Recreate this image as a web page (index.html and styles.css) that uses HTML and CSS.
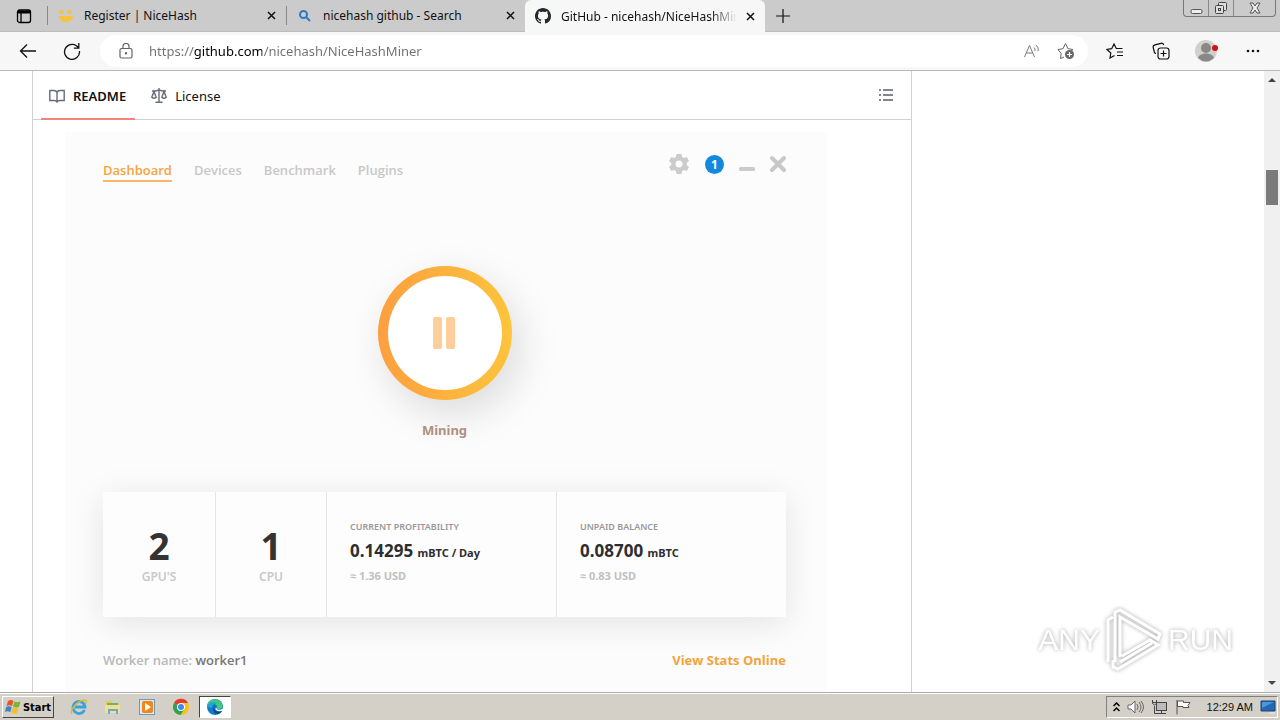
FILE: index.html
```html
<!DOCTYPE html>
<html lang="en">
<head>
    <meta charset="UTF-8">
    <meta name="viewport" content="width=device-width, initial-scale=1.0">
    <title>GitHub - nicehash/NiceHashMiner</title>
    <link rel="stylesheet" href="styles.css">
</head>
<body>
    <header class="browser">
        <div class="tab-bar">
            <button class="tab-actions" aria-label="Tab actions">
                <svg width="16" height="16" viewBox="0 0 16 16" fill="none" stroke="#000"><rect x="1.500" y="2" width="13" height="12.500" rx="2" stroke-width="1.300"/><path d="M2 4h12" stroke-width="3"/><path d="M5 5v9" stroke-width="1.300"/></svg>
            </button>
            <div class="tab">
                <svg class="tab-icon" width="16" height="16" viewBox="0 0 16 16"><rect x="1" y="2" width="5" height="4" rx="2" fill="#f2c14b"/><rect x="9" y="2" width="5" height="4" rx="2" fill="#f2c14b"/><path d="M1 8h14c0 8-14 8-14 0z" fill="#f2c43f"/></svg>
                <a class="tab-title" href="#">Register | NiceHash</a>
                <button class="tab-close" aria-label="Close tab"><svg width="9" height="9" viewBox="0 0 9 9"><path d="M1 1l7 7M8 1L1 8" stroke="#111" stroke-width="1.500"/></svg></button>
            </div>
            <div class="tab">
                <svg class="tab-icon" width="16" height="16" viewBox="0 0 16 16" fill="none" stroke="#2f78c4" stroke-width="2"><circle cx="6.500" cy="6.500" r="3.500"/><path d="M9 9l4 4"/></svg>
                <a class="tab-title" href="#">nicehash github - Search</a>
                <button class="tab-close" aria-label="Close tab"><svg width="9" height="9" viewBox="0 0 9 9"><path d="M1 1l7 7M8 1L1 8" stroke="#111" stroke-width="1.500"/></svg></button>
            </div>
            <div class="tab active">
                <svg class="tab-icon" width="16" height="16" viewBox="0 0 16 16" fill="#24292f"><path d="M8 0C3.580 0 0 3.580 0 8c0 3.540 2.290 6.530 5.470 7.590.4.070.55-.17.55-.38 0-.19-.01-.82-.01-1.490-2.010.37-2.530-.49-2.690-.94-.09-.23-.48-.94-.82-1.130-.28-.15-.68-.52-.01-.53.63-.01 1.080.58 1.230.82.72 1.210 1.870.87 2.330.66.070-.52.28-.87.51-1.070-1.780-.2-3.640-.89-3.640-3.950 0-.87.31-1.590.82-2.150-.08-.2-.36-1.020.08-2.120 0 0 .67-.21 2.200.82.64-.18 1.320-.27 2-.27s1.360.09 2 .27c1.530-1.040 2.200-.82 2.200-.82.44 1.100.16 1.920.08 2.120.51.56.82 1.270.82 2.150 0 3.070-1.870 3.750-3.650 3.950.29.25.54.73.54 1.480 0 1.070-.01 1.930-.01 2.200 0 .21.15.46.55.38A8.010 8.010 0 0 0 16 8c0-4.420-3.580-8-8-8z"/></svg>
                <a class="tab-title" href="#">GitHub - nicehash/NiceHashMiner</a>
                <button class="tab-close" aria-label="Close tab"><svg width="9" height="9" viewBox="0 0 9 9"><path d="M1 1l7 7M8 1L1 8" stroke="#111" stroke-width="1.500"/></svg></button>
            </div>
            <button class="new-tab" aria-label="New tab"><svg width="14" height="14" viewBox="0 0 14 14"><path d="M7 0v14M0 7h14" stroke="#111" stroke-width="1.200"/></svg></button>
            <div class="window-buttons">
                <button aria-label="Minimize"><svg width="13" height="14" viewBox="0 0 13 14" fill="#eee" stroke="#555"><rect x="1" y="8.500" width="11" height="4" rx="1.500"/></svg></button>
                <button aria-label="Restore"><svg width="14" height="14" viewBox="0 0 14 14" fill="#ddd" stroke="#444"><rect x="4.500" y="1.500" width="8" height="8" rx="1"/><rect x="1.500" y="4.500" width="8" height="8" rx="1"/><rect x="4.500" y="7.500" width="2" height="2"/></svg></button>
                <button class="wide" aria-label="Close"><svg width="14" height="14" viewBox="0 0 14 14"><path d="M2 2h3l2 3 2-3h3L9 7l3 5H9L7 9l-2 3H2l3-5z" fill="#eee" stroke="#555"/></svg></button>
            </div>
        </div>

        <div class="toolbar">
            <button class="nav-button" aria-label="Back"><svg width="18" height="16" viewBox="0 0 18 16" fill="none" stroke="#111" stroke-width="1.300"><path d="M17 8H1.500M8 1.500L1.500 8 8 14.500"/></svg></button>
            <button class="nav-button" aria-label="Refresh"><svg width="18" height="18" viewBox="0 0 18 18" fill="none" stroke="#111" stroke-width="1.300"><path d="M15.500 6A7.500 7.500 0 1 0 16.500 9M15.800 1v5.200h-5"/></svg></button>
            <div class="address-bar">
                <svg width="14" height="16" viewBox="0 0 14 16" fill="none" stroke="#666" stroke-width="1.200"><rect x="1" y="5.500" width="12" height="9.500" rx="1.500"/><path d="M4 5.500V3.500a3 3 0 0 1 6 0v2"/><circle cx="7" cy="10.300" r=".6" fill="#666"/></svg>
                <input class="address" type="text" aria-label="Address" value="https://github.com/nicehash/NiceHashMiner">
                <button aria-label="Read aloud"><svg width="18" height="16" viewBox="0 0 18 16" fill="none" stroke="#777"><path d="M1.500 14L6.500 2.500l5 11.500M3.300 10h6.500M11 4.500q1.500 1.500 1 3.500M13.200 2.200q2.800 2.300 2 6"/></svg></button>
                <button aria-label="Add to favorites"><svg width="18" height="18" viewBox="0 0 18 18" fill="none" stroke="#666"><path d="M7 15l-3.500 1.500.6-5L1 7.500l5-.8L8.500 1.500 11 6.700l5 .8-2 1.700"/><circle cx="12.500" cy="12.500" r="4.500" fill="#666" stroke="none"/><path d="M12.500 10v5M10 12.500h5" stroke="#fff" stroke-width="1.200"/></svg></button>
            </div>
            <button class="tool" aria-label="Favorites"><svg width="18" height="16" viewBox="0 0 18 16" fill="none" stroke="#111" stroke-width="1.200"><path d="M8.500 12.500L4 15l.8-5L1 6.500l4.700-.8L8 1l2.300 4.500h6.200M11 9h6M11 12.500h6"/></svg></button>
            <button class="tool" aria-label="Collections"><svg width="18" height="18" viewBox="0 0 18 18" fill="none" stroke="#111" stroke-width="1.200"><path d="M4 11.500c-1 0-1.500-.7-1.700-1.500L1.200 5.500C.9 4 1.500 3.200 3 2.800l6-1.500c1.500-.4 2.300.2 2.700 1.700"/><rect x="6" y="6" width="11" height="11" rx="2.500"/><path d="M11.500 8.500v6M8.500 11.500h6"/></svg></button>
            <button class="tool profile" aria-label="Profile"><svg width="24" height="22" viewBox="0 0 24 22"><circle cx="11" cy="11" r="11" fill="#d2d0ce"/><circle cx="11" cy="8" r="5" fill="#8a8886"/><path d="M3 18c1.500-6 14.500-6 16 0q-8 7-16 0z" fill="#8a8886"/><circle cx="20" cy="8" r="3" fill="#d40f14"/></svg></button>
            <button class="tool" aria-label="Settings and more"><svg width="14" height="4" viewBox="0 0 14 4" fill="#111"><circle cx="2" cy="2" r="1.300"/><circle cx="7" cy="2" r="1.300"/><circle cx="12" cy="2" r="1.300"/></svg></button>
        </div>
    </header>

    <main class="page">
        <section class="readme">
            <nav class="readme-nav">
                <a class="readme-tab selected" href="#"><svg width="16" height="16" viewBox="0 0 16 16" fill="none" stroke="#656d76" stroke-width="1.400"><path d="M8 4.500C7.500 3 6.500 2.500 5 2.500H.8v10H5c1.500 0 2.500.5 3 1.500.5-1 1.500-1.500 3-1.500h4.200v-10H11c-1.500 0-2.500.5-3 2zM8 4.500V14"/></svg>README</a>
                <a class="readme-tab" href="#"><svg width="16" height="16" viewBox="0 0 16 16" fill="none" stroke="#656d76" stroke-width="1.400"><path d="M8 0v14M4.500 14.300h7M1 3h3.500L8 2l3.500 1H15M3 3.500L.8 9.200q2.200 2 4.400 0zM13 3.500l-2.200 5.700q2.200 2 4.400 0z"/></svg>License</a>
                <button class="outline" aria-label="Outline"><svg width="16" height="14" viewBox="0 0 16 14" stroke="#57606a" stroke-width="1.400"><path d="M5 2h10M5 7h10M5 12h10M1 2h2M1 7h2M1 12h2"/></svg></button>
            </nav>

            <article class="miner">
                <div class="miner-head">
                    <nav class="miner-nav">
                        <a class="current" href="#">Dashboard</a>
                        <a href="#">Devices</a>
                        <a href="#">Benchmark</a>
                        <a href="#">Plugins</a>
                    </nav>
                    <div class="miner-tools">
                        <button aria-label="Settings"><svg width="22" height="22" viewBox="0 0 22 22"><path d="M8.500 1h5l.6 3 1.800 1 2.900-1 2.200 4-2.300 2v2l2.300 2-2.200 4-2.900-1-1.800 1-.6 3h-5l-.6-3-1.800-1-2.900 1L1 14l2.300-2v-2L1 8l2.200-4 2.900 1 1.800-1z" fill="#cbcbcb"/><circle cx="11" cy="11" r="3.500" fill="#fcfcfc"/></svg></button>
                        <button class="notice" aria-label="1 notification">1</button>
                        <button aria-label="Minimize miner"><svg width="16" height="18" viewBox="0 0 16 18"><rect y="12" width="16" height="4" rx="1.500" fill="#cbcbcb"/></svg></button>
                        <button aria-label="Close miner"><svg width="16" height="18" viewBox="0 0 16 18"><path d="M2 3l12 12M14 3L2 15" stroke="#c8c8c8" stroke-width="4" stroke-linecap="round"/></svg></button>
                    </div>
                </div>

                <div class="status">
                    <button class="pause" aria-label="Pause mining"><svg width="24" height="32" viewBox="0 0 24 32" fill="#fdce9b"><rect width="9" height="32" rx="2"/><rect x="13" width="9" height="32" rx="2"/></svg></button>
                    <p class="status-text">Mining</p>
                </div>

                <div class="stats">
                    <div class="count"><strong>2</strong><span>GPU'S</span></div>
                    <div class="count"><strong>1</strong><span>CPU</span></div>
                    <div class="amount">
                        <h2>CURRENT PROFITABILITY</h2>
                        <p class="btc">0.14295 <small>mBTC / Day</small></p>
                        <p class="usd">≈ 1.36 USD</p>
                    </div>
                    <div class="amount">
                        <h2>UNPAID BALANCE</h2>
                        <p class="btc">0.08700 <small>mBTC</small></p>
                        <p class="usd">≈ 0.83 USD</p>
                    </div>
                </div>

                <div class="miner-foot">
                    <span>Worker name: <b>worker1</b></span>
                    <a href="#">View Stats Online</a>
                </div>
            </article>
        </section>

        <div class="scrollbar">
            <svg width="8" height="4" viewBox="0 0 8 4"><path d="M0 4l4-4 4 4z" fill="#444"/></svg>
            <div class="track"><div class="thumb"></div></div>
            <svg width="8" height="4" viewBox="0 0 8 4"><path d="M0 0l4 4 4-4z" fill="#444"/></svg>
        </div>

        <div class="watermark">
            <span>ANY</span>
            <svg width="60" height="64" viewBox="0 0 60 64" fill="none" stroke="#fff" stroke-width="3"><path d="M4 54V12l5-3M11 54V4l5-2 40 24-2 5-38-22v40M18 48l28-16 8 5-40 24-5-2v-7M16 54l32-19"/></svg>
            <span>RUN</span>
        </div>
    </main>

    <footer class="taskbar">
        <button class="start"><svg width="17" height="16" viewBox="0 0 17 16"><path d="M3 2q3-2 5.500 0L7 7Q4.500 5.500 1.500 7z" fill="#e8552b"/><path d="M9.500 2.500q3 1.500 6 0L14 8q-3 1-6-.5z" fill="#78b535"/><path d="M1.200 8q3-1.500 5.500 0L5.300 13q-3-1.500-5.300 0z" fill="#3b82d0"/><path d="M7.700 8.500q3 1.500 6 0L12.200 14q-3 1.500-6-.5z" fill="#f4be28"/></svg>Start</button>
        <button class="task" aria-label="Internet Explorer"><svg width="18" height="18" viewBox="0 0 18 18" fill="none"><path d="M14.500 12A6 6 0 1 1 15 9H5" stroke="#38a3de" stroke-width="2.800"/><path d="M2 16C-1 13 7 3 14 2c3-.3 3 2 1.500 4" stroke="#e6b62c" stroke-width="1.400"/></svg></button>
        <button class="task" aria-label="Explorer"><svg width="18" height="18" viewBox="0 0 18 18"><path d="M2 3h5l1 2h7v9H2z" fill="#e9c75a"/><path d="M3 5h11v4H3z" fill="#69b56b"/><path d="M1 7h15v8H1z" fill="#f6df8c"/><path d="M4 16v-5h10v5h-2v-3H6v3z" fill="#61acd9"/></svg></button>
        <button class="task" aria-label="Media Player"><svg width="18" height="18" viewBox="0 0 18 18"><rect x="1.500" y="1.500" width="15" height="15" fill="#d9ebf8" stroke="#6c9bc0"/><rect x="4" y="3" width="11" height="12" rx="2" fill="#f18619"/><path d="M7 5l6 4-6 4z" fill="#fff"/></svg></button>
        <button class="task" aria-label="Chrome"><svg width="18" height="18" viewBox="0 0 18 18"><circle cx="9" cy="9" r="8" fill="#fbc116"/><path d="M9 9L2 5a8 8 0 0 1 14 0H9z" fill="#e33b2e"/><path d="M9 9L2 5a8 8 0 0 0 6.500 12l4-6z" fill="#2da44e"/><circle cx="9" cy="9" r="4" fill="#fff"/><circle cx="9" cy="9" r="3" fill="#4285f4"/></svg></button>
        <button class="task running" aria-label="Edge"><svg width="18" height="18" viewBox="0 0 18 18"><circle cx="9" cy="9" r="8" fill="#1479c9"/><path d="M1 8C2 1 9 0 13 2.500c4 2.500 5 7.500 1.500 8.500-2 .6-4-.2-4-1 1.500-2.500-1-4.500-3.500-4C4 6.300 2 7 1 8z" fill="#42c878"/><path d="M1 8c2-5 9-5 10-1.500C8 5 5.500 8 6 11c-2-3-5-1-5-3z" fill="#21a5d8"/><path d="M9 7.500c-2 2.500-.5 6 3 6 2 0 3.500-.7 4.500-1.500-1 2.500-3 4-5 4-4 0-6-5-2.500-8.500z" fill="#0c4a92"/><path d="M10.500 10c0 2 4 2.500 6.500.5v2c-3 1.500-8 1-7.500-2.500z" fill="#fff"/></svg></button>
        <div class="tray">
            <svg width="7" height="10" viewBox="0 0 7 10" fill="none" stroke="#000" stroke-width="1.500"><path d="M.5 4l3-3 3 3M.5 9l3-3 3 3"/></svg>
            <svg width="17" height="16" viewBox="0 0 17 16" fill="#fff" stroke="#666"><path d="M1 6h3l4-4v12l-4-4H1z"/><path d="M10 5q2 3 0 6M12 3q4 5 0 10M14 2q5 6 0 12" fill="none"/></svg>
            <svg width="17" height="16" viewBox="0 0 17 16" fill="#bbb" stroke="#444"><rect x="5.500" y="3.500" width="10" height="8"/><path d="M6 14.500h9M10.500 12v2" fill="none"/><path d="M3.500 7v7.500H8M1.500 1v3.500q2 3 4 0V1M1 3.500h5" fill="none"/></svg>
            <svg width="17" height="16" viewBox="0 0 17 16" fill="#fff" stroke="#555"><path d="M2 1v14.500M2.500 2h6v1.500H15l-2 3 1 2H8V7.500H2.500z"/></svg>
            <time>12:29 AM</time>
            <svg width="16" height="14" viewBox="0 0 16 14"><path d="M1 1h14v10H1z" fill="#2468b4" stroke="#164576"/><path d="M2 2h12L2 8z" fill="#4b97dc"/><path d="M9 13h6" stroke="#eee"/></svg>
        </div>
    </footer>
</body>
</html>
```

FILE: styles.css
```css
* {
    box-sizing: border-box;
}
body {
    display: flex;
    flex-direction: column;
    height: 100vh;
    margin: 0;
    overflow: hidden;
    font-family: "Noto Sans", sans-serif;
    font-size: 12px;
    color: #111;
    background: #fff;
}
button {
    display: flex;
    align-items: center;
    justify-content: center;
    padding: 0;
    border: 0;
    background: none;
    font-family: inherit;
    cursor: pointer;
}
svg {
    flex-shrink: 0;
}
a {
    color: inherit;
    text-decoration: none;
}
p, h2 {
    margin: 0;
}

/* browser */
.tab-bar {
    display: flex;
    height: 32px;
    background: #cbcbcb;
    border-bottom: 1px solid #bdbdbd;
}
.tab-actions {
    width: 47px;
}
.tab {
    display: flex;
    align-items: center;
    width: 239px;
    padding: 0 10px;
    border-left: 1px solid #8a8a8a;
    border-image: linear-gradient(transparent 20%, #888 20%, #888 80%, transparent 80%) 1;
}
.tab-title {
    flex: 1;
    min-width: 0;
    margin: 0 9px 0 10px;
    overflow: hidden;
    white-space: nowrap;
}
.tab.active {
    height: 32px;
    width: 240px;
    background: #f7f7f7;
    border: 0;
    border-radius: 6px 6px 0 0;
}
.active .tab-title {
    mask-image: linear-gradient(to right, #000 85%, transparent);
}
.new-tab {
    width: 36px;
}
.window-buttons {
    display: flex;
    height: 17px;
    margin-left: auto;
    margin-right: 4px;
    border: 1px solid #777;
    border-top: 0;
    border-radius: 0 0 4px 4px;
}
.window-buttons button {
    width: 25px;
    border-right: 1px solid #888;
}
.window-buttons .wide {
    width: 41px;
    border: 0;
}
.toolbar {
    display: flex;
    align-items: center;
    height: 39px;
    padding: 0 4px 0 6px;
    background: #f7f7f7;
    border-bottom: 1px solid #b8b8b8;
}
.nav-button, .tool {
    width: 44px;
    height: 32px;
}
.tool {
    width: 46px;
}
.address-bar {
    display: flex;
    flex: 1;
    align-items: center;
    gap: 16px;
    height: 32px;
    margin: 0 4px 0 6px;
    padding: 0 13px 0 19px;
    border-radius: 16px;
    background: #fff;
}
.address {
    flex: 1;
    min-width: 0;
    padding: 0;
    border: 0;
    outline: 0;
    font-family: inherit;
    font-size: 13px;
    color: transparent;
    background: linear-gradient(to right, #707070 45px, #000 45px, #000 113px, #707070 113px);
    background-clip: text;
}

/* page */
.page {
    position: relative;
    display: flex;
    flex: 1;
    min-height: 0;
    justify-content: space-between;
    overflow: hidden;
}
.readme {
    width: 880px;
    margin-left: 32px;
    border: 1px solid #d0d0d0;
    border-top: 0;
    border-bottom: 0;
}
.readme-nav {
    display: flex;
    align-items: center;
    gap: 8px;
    height: 49px;
    padding: 0 9px 0 8px;
    border-bottom: 1px solid #d0d0d0;
}
.readme-tab {
    display: flex;
    align-items: center;
    gap: 8px;
    height: 49px;
    padding: 3px 9px 0 8px;
    border-bottom: 2px solid transparent;
    font-size: 13px;
}
.readme-tab.selected {
    border-color: #f0837a;
    font-weight: 600;
}
.outline {
    width: 32px;
    height: 32px;
    margin-left: auto;
}
.miner {
    width: 761px;
    height: 600px;
    margin: 12px 0 0 32px;
    padding: 20px 40px 0 38px;
    background: #fcfcfc;
    font-weight: 700;
}
.miner-head {
    display: flex;
    justify-content: space-between;
    height: 30px;
}
.miner-nav {
    display: flex;
    gap: 22px;
    align-items: flex-end;
    font-family: "Open Sans", "Noto Sans", sans-serif;
    font-size: 13px;
    font-weight: 600;
    line-height: 20px;
    color: #c8c8c8;
}
.miner-nav a {
    border-bottom: 2px solid transparent;
}
.miner-nav .current {
    color: #f9a340;
    border-color: #f9b568;
}
.miner-tools {
    display: flex;
    gap: 15px;
    height: 24px;
}
.notice {
    align-self: center;
    width: 19px;
    height: 19px;
    border-radius: 50%;
    background: #1489dc;
    color: #fff;
    font-size: 12px;
    font-weight: 700;
}
.status {
    display: flex;
    flex-direction: column;
    align-items: center;
    padding-top: 84px;
}
.pause {
    width: 134px;
    height: 134px;
    border: 10px solid transparent;
    border-radius: 50%;
    background: linear-gradient(#fff, #fff) padding-box, linear-gradient(to right, #fd9f40, #fdc43c) border-box;
    box-shadow: 8px 14px 40px rgba(0, 0, 0, 0.13);
}
.status-text {
    margin-top: 20px;
    font-size: 13px;
    line-height: 20px;
    color: #b0907c;
}
.stats {
    display: grid;
    grid-template-columns: 112px 111px 230px 1fr;
    height: 125px;
    margin-top: 52px;
    background: #fdfdfd;
    box-shadow: 0 6px 32px rgba(0, 0, 0, 0.1);
}
.stats > div + div {
    border-left: 1px solid #e4e4e4;
}
.count {
    display: flex;
    flex-direction: column;
    align-items: center;
    padding-top: 34px;
    color: #c8c8c8;
}
.count strong {
    font-size: 37px;
    font-weight: 700;
    line-height: 40px;
    color: #333;
}
.count span {
    font-size: 12px;
    font-weight: 600;
    line-height: 22px;
}
.amount {
    padding: 27px 0 0 23px;
}
.amount h2 {
    font-size: 9px;
    font-weight: 600;
    line-height: 16px;
    color: #999;
}
.btc {
    font-size: 17px;
    line-height: 32px;
    color: #2e2e2e;
}
.btc small {
    font-size: 11px;
}
.usd {
    font-size: 11px;
    line-height: 14px;
    color: #c0c0c0;
}
.miner-foot {
    display: flex;
    justify-content: space-between;
    margin-top: 33px;
    font-family: "Open Sans", "Noto Sans", sans-serif;
    font-size: 13px;
    font-weight: 600;
    line-height: 20px;
    color: #b8b8b8;
}
.miner-foot b {
    font-weight: 600;
    color: #777;
}
.miner-foot a {
    color: #f4a23c;
    font-weight: 700;
}
.scrollbar {
    display: flex;
    flex-direction: column;
    align-items: center;
    gap: 6px;
    width: 16px;
    padding: 7px 0;
    background: #f0f0f0;
}
.track {
    flex: 1;
    padding-top: 82px;
}
.thumb {
    width: 12px;
    height: 35px;
    background: #7b7b7b;
}
.watermark {
    position: absolute;
    right: 47px;
    bottom: 20px;
    display: flex;
    align-items: center;
    gap: 4px;
    color: #fff;
    font-family: "Liberation Sans Narrow", "Liberation Sans", sans-serif;
    font-size: 30px;
    filter: drop-shadow(0 0 2px rgba(0, 0, 0, 0.35));
}

/* taskbar */
.taskbar {
    display: flex;
    align-items: center;
    height: 28px;
    padding: 1px 2px 0;
    border-top: 1px solid #aaa;
    background: #d4d0c8;
    box-shadow: inset 0 1px #fff;
}
.start {
    gap: 1px;
    width: 52px;
    height: 22px;
    margin-right: 9px;
    border: 1px solid;
    border-color: #fff #444 #444 #fff;
    font-family: "DejaVu Sans Condensed", "DejaVu Sans", sans-serif;
    font-size: 11px;
    font-weight: 700;
}
.task {
    width: 32px;
    height: 22px;
    margin-right: 2px;
}
.task.running {
    border: 1px solid;
    border-color: #444 #fff #fff #444;
    background: #fff;
}
.tray {
    display: flex;
    align-items: center;
    gap: 7px;
    height: 22px;
    margin-left: auto;
    padding: 0 1px 0 6px;
    border: 1px solid;
    border-color: #808080 #fff #fff #808080;
}
.tray time {
    font-family: "Liberation Sans", sans-serif;
    font-size: 11px;
    margin-left: 8px;
}
```
